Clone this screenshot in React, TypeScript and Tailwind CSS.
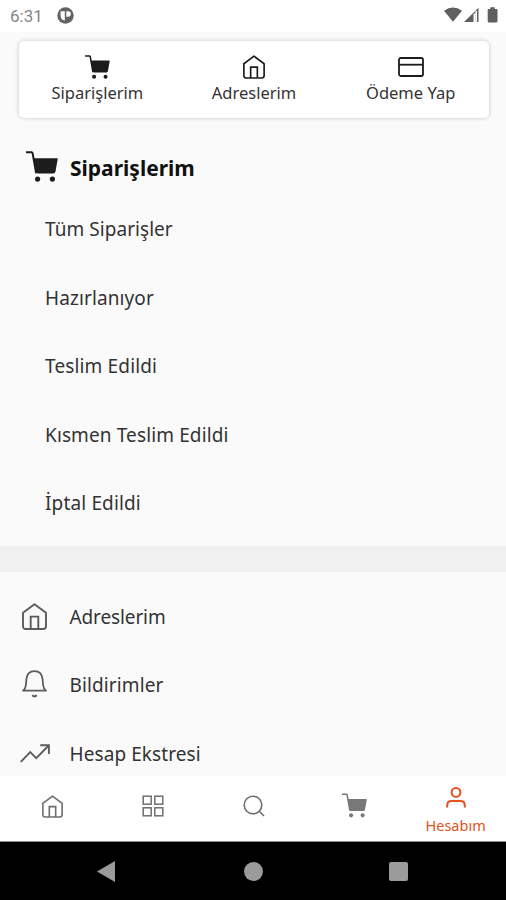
import type { ReactNode } from 'react';

interface IconProps {
    className?: string;
}

function HomeIcon({ className }: IconProps) {
    return (
        <svg className={className} viewBox="0 0 25 27" fill="none" stroke="currentColor" strokeWidth="1.9">
            <path d="M1 9.8 12.5 1.2 24 9.8V23.3Q24 26 21.3 26H3.7Q1 26 1 23.3Z" strokeLinejoin="round" />
            <path d="M8.7 26V13.6H16.3V26" />
        </svg>
    );
}

function CartIcon({ className }: IconProps) {
    return (
        <svg className={className} viewBox="0 0 32 31">
            <path d="M.5 1.2H5.6Q6.4 1.2 6.6 2.2L10 21.5" fill="none" stroke="currentColor" strokeWidth="2" strokeLinecap="round" />
            <path d="M7.4 7.2H31.2Q31.8 7.2 31.7 8L29.5 20.6Q29.1 22.6 27.2 22.6H12Q10.2 22.6 9.9 20.8Z" fill="currentColor" />
            <circle cx="11.6" cy="28.1" r="2.6" fill="currentColor" />
            <circle cx="26.4" cy="28.1" r="2.6" fill="currentColor" />
        </svg>
    );
}

function CardIcon({ className }: IconProps) {
    return (
        <svg className={className} viewBox="0 0 26 20" fill="none" stroke="currentColor" strokeWidth="1.8">
            <rect x="1" y="1" width="24" height="18" rx="1.8" />
            <path d="M1 7.7H25" />
        </svg>
    );
}

function BellIcon({ className }: IconProps) {
    return (
        <svg className={className} viewBox="0 0 25 28" fill="none" stroke="currentColor" strokeWidth="1.8">
            <path d="M1 20.7H24C21.8 19.2 21.3 17 21 14L20.6 9.2C20.1 4 17.2 1.1 12.5 1.1S4.9 4 4.4 9.2L4 14C3.7 17 3.2 19.2 1 20.7Z" strokeLinejoin="round" />
            <path d="M10.2 25.3Q12.5 27.6 14.8 25.3" strokeWidth="2" />
        </svg>
    );
}

function TrendIcon({ className }: IconProps) {
    return (
        <svg className={className} viewBox="0 0 30 19" fill="none" stroke="currentColor" strokeWidth="1.9">
            <path d="M.8 17.8 10.2 8 16.3 14.1 28.7 1.5" />
            <path d="M20.2 1.2H28.9V10" />
        </svg>
    );
}

function GridIcon({ className }: IconProps) {
    return (
        <svg className={className} viewBox="0 0 22 22" fill="none" stroke="currentColor" strokeWidth="1.5">
            <rect x="1.2" y="1.2" width="8" height="8" />
            <rect x="12.8" y="1.2" width="8" height="8" />
            <rect x="1.2" y="12.8" width="8" height="8" />
            <rect x="12.8" y="12.8" width="8" height="8" />
        </svg>
    );
}

function SearchIcon({ className }: IconProps) {
    return (
        <svg className={className} viewBox="0 0 22 22" fill="none" stroke="currentColor" strokeWidth="1.6">
            <circle cx="10" cy="10" r="8.8" />
            <path d="M16.2 16.2 21 21" />
        </svg>
    );
}

function UserIcon({ className }: IconProps) {
    return (
        <svg className={className} viewBox="0 0 20 21" fill="none" stroke="currentColor" strokeWidth="2">
            <circle cx="10" cy="5.4" r="4.4" />
            <path d="M1.2 20.6V18.4Q1.2 14 5.6 14H14.4Q18.8 14 18.8 18.4V20.6" />
        </svg>
    );
}

function StatusBar() {
    return (
        <div className="flex h-8 items-center justify-between bg-white pl-[10px] pr-2">
            <div className="flex items-center gap-[15px]">
                <span className="w-8 font-[Roboto] text-[17px] leading-8 text-[#858585]">6:31</span>
                <svg className="mb-[2px] h-[17px] w-[17px]" viewBox="0 0 17 17">
                    <circle cx="8.5" cy="8.5" r="8.2" fill="#636363" />
                    <path d="M3.6 4.2H7.8V13.6Q3.6 13 3.6 8.6Z" fill="#fff" />
                    <path d="M9.3 4.2H11A2.8 2.8 0 0 1 11 9.8H9.3Z" fill="#fff" />
                </svg>
            </div>
            <svg className="mb-[2px] h-4 w-[54px]" viewBox="0 0 54 16" fill="#5f5f5f">
                <path d="M0 3.8Q9 -3 18 3.8L9 14.7Z" />
                <path d="M20 15 34.5 .7V15H31.5V6L29.5 7V15Z" />
                <path d="M32.2 4V15" stroke="#fff" strokeWidth="1.6" />
                <path d="M44.3 2H46.3V.3H50.7V2H52.7Q53.5 2 53.5 3V14Q53.5 15.5 52 15.5H45.2Q43.7 15.5 43.7 14V3Q43.7 2 44.3 2Z" />
            </svg>
        </div>
    );
}

interface ShortcutProps {
    icon: ReactNode;
    label: string;
}

function Shortcut({ icon, label }: ShortcutProps) {
    return (
        <div className="flex flex-1 flex-col items-center pt-[13px]">
            <div className="flex h-[25px] items-center">{icon}</div>
            <span className="mt-px whitespace-nowrap text-[16.5px] leading-[26px]">{label}</span>
        </div>
    );
}

const orderLinks = [
    { label: 'Tüm Siparişler', tracking: 'tracking-[0.05px]' },
    { label: 'Hazırlanıyor', tracking: 'tracking-[0.1px]' },
    { label: 'Teslim Edildi', tracking: 'tracking-[0.15px]' },
    { label: 'Kısmen Teslim Edildi', tracking: 'tracking-[0.12px]' },
    { label: 'İptal Edildi', tracking: 'tracking-[0.15px]' },
];

const accountLinks = [
    { label: 'Adreslerim', icon: <HomeIcon className="h-[27px] w-[25px]" />, tracking: 'tracking-[-0.12px]' },
    { label: 'Bildirimler', icon: <BellIcon className="mb-[2px] h-[28px] w-[25px]" />, tracking: 'tracking-[0.12px]' },
    { label: 'Hesap Ekstresi', icon: <TrendIcon className="h-[19px] w-[30px]" />, tracking: 'tracking-[0.08px]' },
];

export default function App() {
    return (
        <div className="flex h-[900px] w-[506px] flex-col overflow-hidden bg-[#fafafa] font-['Noto_Sans','Open_Sans',sans-serif] text-[#333333]">
            <StatusBar />

            <main className="min-h-0 flex-1 overflow-hidden">
                <div className="ml-[19px] mr-[17px] mt-[9px] flex h-[77px] rounded-[5px] bg-white shadow-[0_0_4px_rgba(0,0,0,0.22)]">
                    <Shortcut icon={<CartIcon className="h-[24px] w-[25px] text-[#1c1c1c]" />} label="Siparişlerim" />
                    <Shortcut icon={<HomeIcon className="h-[24px] w-[22px] text-[#1c1c1c]" />} label="Adreslerim" />
                    <Shortcut icon={<CardIcon className="h-[20px] w-[26px] text-[#1c1c1c]" />} label="Ödeme Yap" />
                </div>

                <section className="h-[428px] pt-[23px]">
                    <div className="flex h-[54px] items-center pl-[26px]">
                        <CartIcon className="mb-[4px] h-[31px] w-[32px] text-[#1c1c1c]" />
                        <h2 className="ml-3 mt-px text-[21px] font-bold text-[#111111]">Siparişlerim</h2>
                    </div>
                    <ul>
                        {orderLinks.map(({ label, tracking }) => (
                            <li key={label} className={`flex h-[68.5px] items-center pl-[45px] text-[19px] ${tracking}`}>
                                {label}
                            </li>
                        ))}
                    </ul>
                </section>

                <div className="h-[26px] bg-[#f0f0f0]" />

                <ul className="pt-[10px]">
                    {accountLinks.map(({ label, icon, tracking }) => (
                        <li key={label} className={`flex h-[68.5px] items-center text-[19px] ${tracking}`}>
                            <span className="flex w-[69.5px] justify-center text-[#5c5c5c]">{icon}</span>
                            <span className="pt-px">{label}</span>
                        </li>
                    ))}
                </ul>
            </main>

            <nav className="grid h-[66px] shrink-0 grid-cols-5 border-b border-[#8c8c8c] bg-white pl-[2px] text-[#6e6e6e]">
                <div className="flex items-center justify-center pb-[4px]">
                    <HomeIcon className="h-[23px] w-[21px]" />
                </div>
                <div className="flex items-center justify-center pb-[5px]">
                    <GridIcon className="h-[22px] w-[22px]" />
                </div>
                <div className="flex items-center justify-center pb-[5px]">
                    <SearchIcon className="h-[22px] w-[22px]" />
                </div>
                <div className="flex items-center justify-center pb-[6px]">
                    <CartIcon className="h-[25px] w-[25px] text-[#787878]" />
                </div>
                <div className="flex flex-col items-center pt-[11px] text-[#e2521d]">
                    <UserIcon className="h-[21px] w-[20px]" />
                    <span className="mt-[7px] text-[14.5px] leading-5">Hesabım</span>
                </div>
            </nav>

            <footer className="flex h-[58px] shrink-0 items-center bg-black">
                <svg className="ml-[97px] h-[21px] w-[18px]" viewBox="0 0 18 21" fill="#9b9b9b">
                    <path d="M0 10.5 18 0V21Z" />
                </svg>
                <span className="ml-[129px] h-[19px] w-[19px] rounded-full bg-[#9b9b9b]" />
                <span className="ml-[126px] h-[19px] w-[19px] rounded-[2px] bg-[#9b9b9b]" />
            </footer>
        </div>
    );
}
